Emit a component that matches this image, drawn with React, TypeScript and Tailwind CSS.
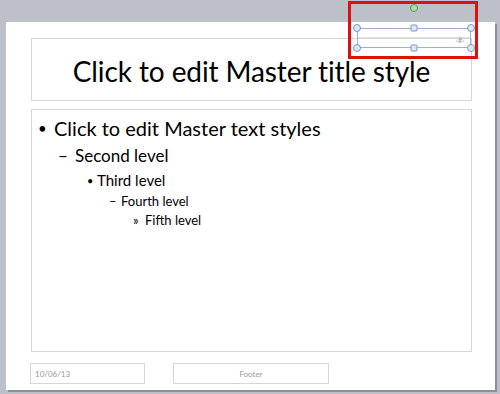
import React from "react";

export default function App() {
  const font = { fontFamily: "Lato, 'Open Sans', sans-serif" };
  return (
    <div className="w-[500px] h-[394px] bg-[#bcc0c9] relative overflow-hidden" style={font}>
      <div className="pt-[22px] pl-[6px]">
        <div className="w-[489px] h-[368px] bg-white shadow-[2px_2px_0_#8c9098] pt-[16px] pl-[25px] flex flex-col">
          <div className="w-[441px] h-[63px] border border-[#d6d6d6] flex items-center justify-center pt-[3px]">
            <span className="text-[28px] text-black leading-none tracking-[-0.1px]">Click to edit Master title style</span>
          </div>
          <div className="w-[441px] h-[243px] mt-[8px] border border-[#d6d6d6] pt-[6px] text-black">
            <div className="flex items-center h-[24px] pl-[6px] text-[20px] leading-none">
              <span className="w-[16px] text-[15px]">•</span>
              <span>Click to edit Master text styles</span>
            </div>
            <div className="flex items-center h-[24px] mt-[3px] pl-[26px] text-[17px] leading-none">
              <span className="w-[17px]">–</span>
              <span>Second level</span>
            </div>
            <div className="flex items-center h-[20px] mt-[3px] pl-[55px] text-[15px] leading-none">
              <span className="w-[10px] text-[11px]">•</span>
              <span>Third level</span>
            </div>
            <div className="flex items-center h-[18px] mt-[2px] pl-[77px] text-[13px] leading-none">
              <span className="w-[12px]">–</span>
              <span>Fourth level</span>
            </div>
            <div className="flex items-center h-[18px] mt-[1px] pl-[101px] text-[13px] leading-none">
              <span className="w-[12px]">»</span>
              <span>Fifth level</span>
            </div>
          </div>
          <div className="flex mt-[11px]">
            <div className="w-[115px] h-[21px] ml-[-1px] border border-[#d6d6d6] flex items-center pl-[4px] text-[8px] text-[#999999]">
              10/06/13
            </div>
            <div className="w-[156px] h-[21px] ml-[28px] border border-[#d6d6d6] flex items-center justify-center text-[8px] text-[#999999]">
              Footer
            </div>
          </div>
        </div>
      </div>

      {/* slide number placeholder selected */}
      <div className="absolute left-[357px] top-[28px] w-[114px] h-[20px] border border-[#9db0d0]">
        <div className="absolute left-0 right-0 top-[8px] h-px bg-[#e0e0e0]" />
        <span className="absolute right-[6px] top-[8px] text-[7px] text-[#999999] leading-none">‹#›</span>
      </div>
      {/* handles */}
      <svg className="absolute left-0 top-0" width="500" height="394">
        <circle cx="414" cy="8" r="3.5" fill="#a8e0a0" stroke="#5aa050" strokeWidth="1" />
        {[357, 471].map((x) =>
          [28, 48].map((y) => (
            <circle key={`${x}-${y}`} cx={x} cy={y} r="3.5" fill="#dce8f8" stroke="#7c96c0" strokeWidth="1" />
          ))
        )}
        <rect x="411" y="25" width="6" height="6" rx="1" fill="#dce8f8" stroke="#7c96c0" strokeWidth="1" />
        <rect x="411" y="45" width="6" height="6" rx="1" fill="#dce8f8" stroke="#7c96c0" strokeWidth="1" />
      </svg>
      {/* red highlight */}
      <div className="absolute left-[348px] top-[1px] w-[130px] h-[58px] border-[3px] border-[#e01010]" />
    </div>
  );
}
